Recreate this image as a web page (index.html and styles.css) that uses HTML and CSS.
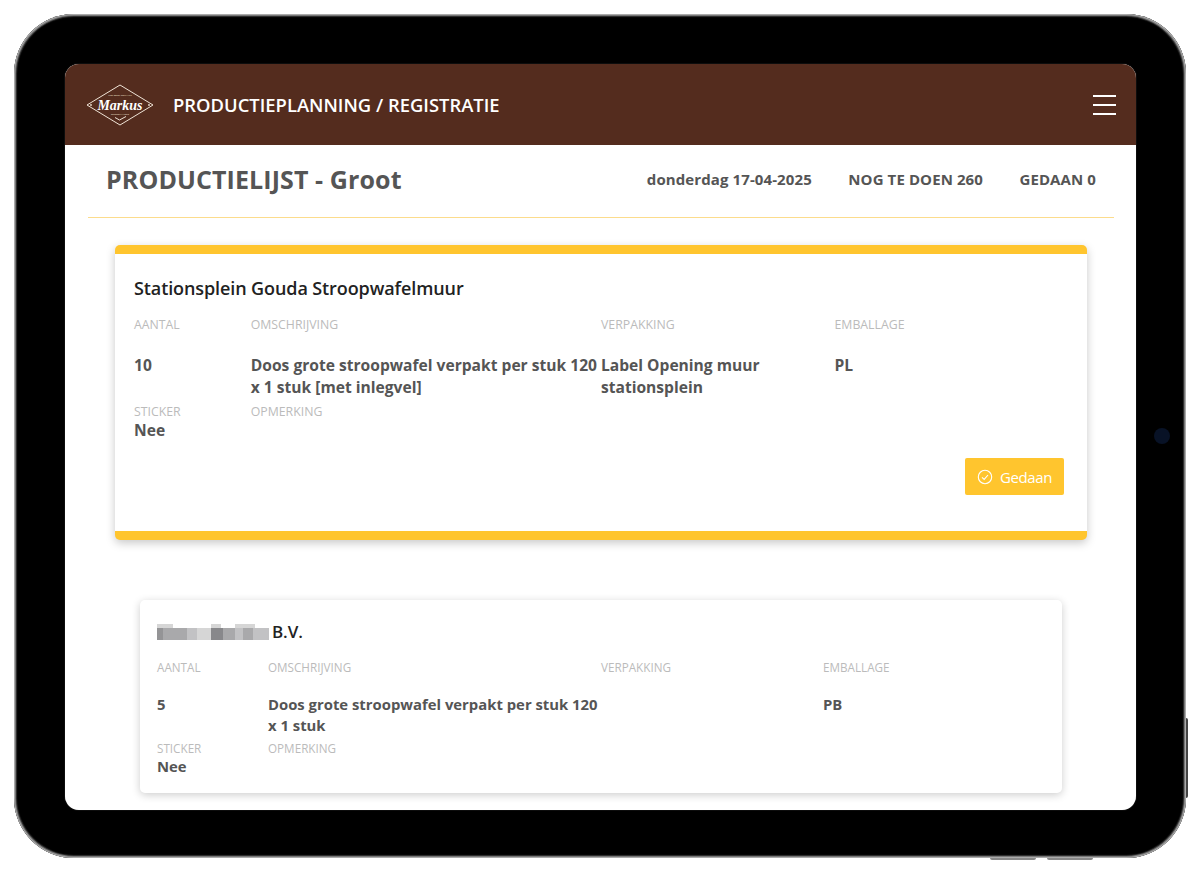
FILE: index.html
```html
<!DOCTYPE html>
<html lang="nl">
<head>
<meta charset="utf-8">
<title>Productieplanning</title>
<link rel="stylesheet" href="styles.css">
</head>
<body>
<div class="device">
  <span class="camera"></span>
  <span class="side-btn"></span>
  <span class="bottom-btn bottom-btn-a"></span>
  <span class="bottom-btn bottom-btn-b"></span>
  <div class="screen">
    <header class="topbar">
      <svg class="logo" viewBox="0 0 70 42" aria-label="Markus">
        <path class="logo-line" d="M35 1 L68 21 L35 41 L2 21 Z"/>
        <circle class="logo-dot" cx="6" cy="21" r="0.9"/>
        <circle class="logo-dot" cx="64" cy="21" r="0.9"/>
        <text class="logo-small" x="35" y="11.500">MET ZORG GEMAAKT</text>
        <text class="logo-name" x="35" y="25.500">Markus</text>
        <text class="logo-small" x="35" y="30.500">STROOPWAFELS</text>
        <path class="logo-line" d="M30 33.500 L34.500 36 L41 32.500"/>
      </svg>
      <h1 class="app-title">PRODUCTIEPLANNING / REGISTRATIE</h1>
      <div class="burger"><span></span><span></span><span></span></div>
    </header>

    <section class="pagehead">
      <h2 class="page-title">PRODUCTIELIJST - Groot</h2>
      <div class="stats">
        <span>donderdag 17-04-2025</span>
        <span>NOG TE DOEN 260</span>
        <span>GEDAAN 0</span>
      </div>
    </section>

    <main class="list">
      <article class="card card-active">
        <h3 class="card-title">Stationsplein Gouda Stroopwafelmuur</h3>
        <div class="grid">
          <div class="label">AANTAL</div>
          <div class="label">OMSCHRIJVING</div>
          <div class="label">VERPAKKING</div>
          <div class="label">EMBALLAGE</div>
        </div>
        <div class="grid values">
          <div class="value">10</div>
          <div class="value">Doos grote stroopwafel verpakt per stuk 120 x 1 stuk [met inlegvel]</div>
          <div class="value">Label Opening muur stationsplein</div>
          <div class="value">PL</div>
        </div>
        <div class="grid extras">
          <div><div class="label">STICKER</div><div class="value">Nee</div></div>
          <div><div class="label">OPMERKING</div></div>
        </div>
        <div class="actions">
          <button class="done-btn" type="button">
            <svg class="check" viewBox="0 0 16 16"><circle cx="8" cy="8" r="6.700"/><path d="M5 8.300 L7.200 10.400 L11 6"/></svg>
            Gedaan
          </button>
        </div>
      </article>

      <article class="card card-next">
        <h3 class="card-title">
          <svg class="redacted" viewBox="0 0 112 16" aria-hidden="true">
            <rect class="p1" x="0" y="0" width="16" height="4"/>
            <rect class="p1" x="54" y="0" width="10" height="4"/><rect class="p1" x="78" y="0" width="20" height="4"/>
            <rect class="p4" x="0" y="4" width="6" height="12"/><rect class="p3" x="6" y="4" width="24" height="12"/>
            <rect class="p2" x="30" y="4" width="10" height="12"/><rect class="p1" x="40" y="4" width="14" height="12"/>
            <rect class="p5" x="54" y="4" width="12" height="12"/><rect class="p3" x="66" y="4" width="12" height="12"/>
            <rect class="p2" x="78" y="4" width="8" height="12"/><rect class="p3" x="86" y="4" width="10" height="12"/>
            <rect class="p2" x="96" y="4" width="16" height="12"/>
          </svg>
          B.V.
        </h3>
        <div class="grid">
          <div class="label">AANTAL</div>
          <div class="label">OMSCHRIJVING</div>
          <div class="label">VERPAKKING</div>
          <div class="label">EMBALLAGE</div>
        </div>
        <div class="grid values">
          <div class="value">5</div>
          <div class="value">Doos grote stroopwafel verpakt per stuk 120 x 1 stuk</div>
          <div class="value"></div>
          <div class="value">PB</div>
        </div>
        <div class="grid extras">
          <div><div class="label">STICKER</div><div class="value">Nee</div></div>
          <div><div class="label">OPMERKING</div></div>
        </div>
      </article>
    </main>
  </div>
</div>
</body>
</html>
```
FILE: styles.css
```css
* { box-sizing: border-box; }
html, body { margin: 0; height: 873px; background: #fff; overflow: hidden; }
body { padding: 14px; font-family: "Open Sans", "Noto Sans", sans-serif; }

.device {
  position: relative;
  width: 1172px;
  height: 844px;
  padding: 50px 50px 48px 51px;
  background: #000;
  border-radius: 60px;
  box-shadow: inset 0 0 0 1px #aaa, inset 0 0 0 2px #777, inset 0 0 1px 3px #333;
}
.camera {
  position: absolute;
  left: 1140px;
  top: 414px;
  width: 16px;
  height: 16px;
  border-radius: 50%;
  background: #081226;
}
.side-btn {
  position: absolute;
  left: 1172px;
  top: 704px;
  width: 2px;
  height: 80px;
  background: #444;
  border-radius: 0 2px 2px 0;
}
.bottom-btn {
  position: absolute;
  top: 844px;
  width: 46px;
  height: 2px;
  background: #888;
  border-radius: 0 0 2px 2px;
}
.bottom-btn-a { left: 976px; }
.bottom-btn-b { left: 1033px; }

.screen {
  display: flex;
  flex-direction: column;
  height: 746px;
  background: #fff;
  border-radius: 14px;
  overflow: hidden;
  box-shadow: 0 0 1px rgba(255, 255, 255, 0.5);
}

.topbar {
  flex: none;
  display: flex;
  align-items: center;
  height: 81px;
  padding: 0 20px;
  background: #542c1e;
  color: #fff;
}
.logo { flex: none; width: 70px; height: 42px; }
.logo-line { fill: none; stroke: #efe3d6; stroke-width: 1; }
.logo-dot { fill: #efe3d6; }
.logo-small { fill: #efe3d6; font-size: 2.400px; text-anchor: middle; font-family: "Open Sans", sans-serif; }
.logo-name { fill: #fff; font: italic 700 14px "Liberation Serif", serif; text-anchor: middle; }
.app-title { margin: 1px 0 0 18px; font-size: 18.400px; font-weight: 600; line-height: 1; }
.burger { margin-left: auto; display: flex; flex-direction: column; gap: 7px; width: 23px; }
.burger span { display: block; height: 2px; background: #fff; }

.pagehead {
  flex: none;
  display: flex;
  align-items: center;
  justify-content: space-between;
  height: 73px;
  margin: 0 22px 0 23px;
  padding: 0 18px 4px 18px;
  border-bottom: 1px solid #fcdc8c;
  color: #555;
}
.page-title { margin: 0; font-size: 25px; font-weight: 700; line-height: 1; letter-spacing: 0.100px; }
.stats { display: flex; gap: 36.500px; font-size: 15px; font-weight: 700; letter-spacing: 0.100px; }

.list { flex: 1; min-height: 0; display: flex; flex-direction: column; }

.card { background: #fff; }
.card-active {
  margin: 27px 49px 0 50px;
  height: 295px;
  padding: 21px 19px 0;
  border-top: 9px solid #ffc52e;
  border-bottom: 9px solid #ffc52e;
  border-radius: 5px;
  box-shadow: 0 3px 10px rgba(0, 0, 0, 0.22);
}
.card-next {
  margin: 60px 74px 0 75px;
  height: 193px;
  padding: 19px 17px 0;
  border-radius: 5px;
  box-shadow: 0 2px 8px rgba(0, 0, 0, 0.2);
}

.card-title { margin: 0; font-size: 18px; font-weight: 600; line-height: 26px; color: #222; letter-spacing: -0.1px; }
.card-next .card-title { display: flex; align-items: center; gap: 3px; font-size: 17px; }
.redacted { width: 112px; height: 16px; filter: blur(0.5px); }
.p1 { fill: #d6d6d6; }
.p2 { fill: #c2c2c4; }
.p3 { fill: #a9a9ab; }
.p4 { fill: #949496; }
.p5 { fill: #88888b; }

.grid { display: grid; grid-template-columns: 1fr 3fr 2fr 2fr; }
.card-active .grid:first-of-type { margin-top: 16px; }
.card-next .grid:first-of-type { margin-top: 14px; }

.label { font-size: 12.300px; line-height: 16px; color: #bbb; }
.value { font-size: 15.600px; font-weight: 700; line-height: 22px; color: #555; }

.card-active .values { margin-top: 21px; }
.card-active .extras { margin-top: 6px; }
.card-active .extras .label { line-height: 15px; }
.card-next .label { font-size: 11.700px; line-height: 16px; }
.card-next .value { font-size: 14.850px; line-height: 21px; }
.card-next .values { margin-top: 19px; }
.card-next .extras { margin-top: 4px; }

.actions { display: flex; justify-content: flex-end; margin: 17px -15px 0 0; padding-right: 19px; }
.done-btn {
  display: flex;
  align-items: center;
  justify-content: center;
  gap: 7px;
  width: 99px;
  height: 37px;
  padding: 0;
  border: 0;
  border-radius: 2px;
  background: #ffc52e;
  color: #fff;
  font: 400 15px "Open Sans", sans-serif;
  letter-spacing: -0.4px;
}
.check { width: 16px; height: 16px; fill: none; stroke: #fff; stroke-width: 1.100; }
```
